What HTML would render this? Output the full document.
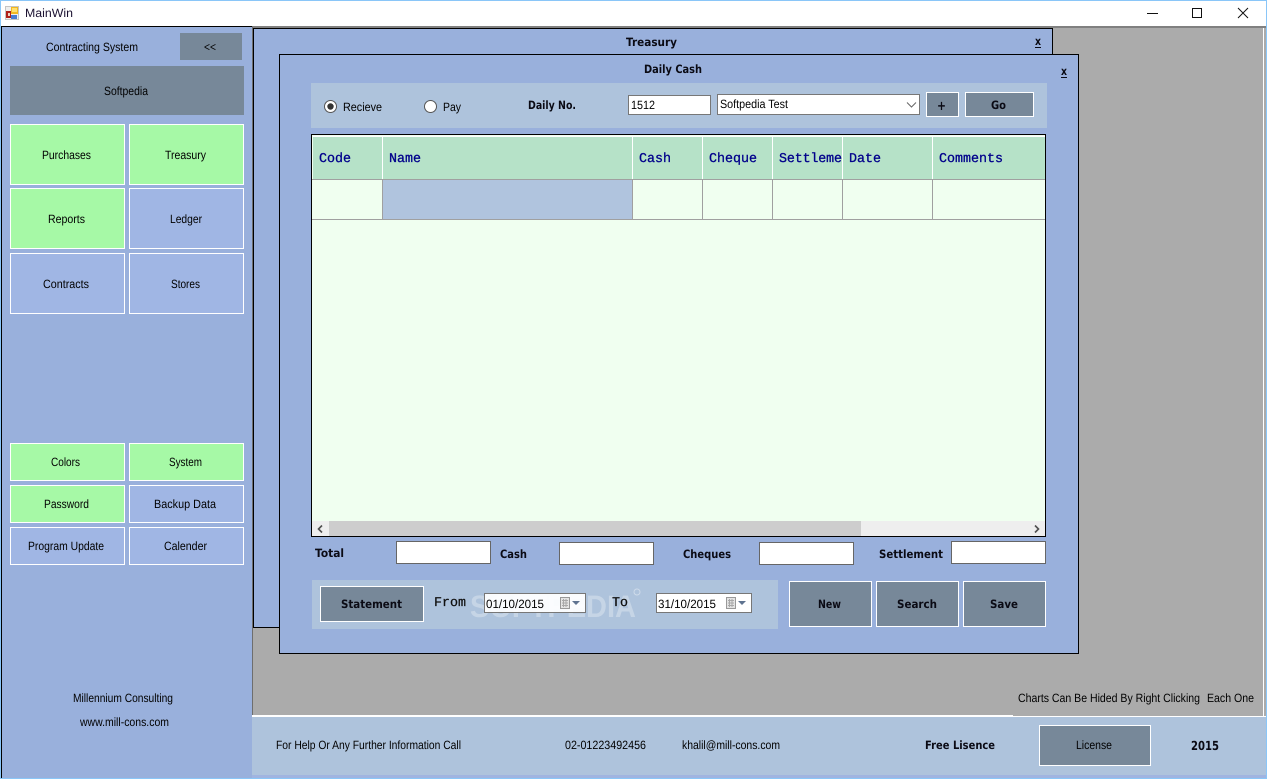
<!DOCTYPE html>
<html><head><meta charset="utf-8"><title>MainWin</title>
<style>
html,body{margin:0;padding:0;background:#fff;width:1267px;height:779px;overflow:hidden}
svg{display:block}
text{font-family:"Liberation Sans",sans-serif;font-size:12px;fill:#000;text-rendering:geometricPrecision}
.b{font-family:"DejaVu Sans",sans-serif;font-weight:bold;font-size:11.5px;fill:#0a0a14}
.m{font-family:"Liberation Mono",monospace;font-size:13.33px;fill:#00008b;stroke:#00008b;stroke-width:.3}
.k{font-family:"Liberation Mono",monospace;font-size:13.33px;fill:#111;stroke:#111;stroke-width:.25}
rect,line{shape-rendering:crispEdges}
</style></head><body>
<svg xmlns="http://www.w3.org/2000/svg" width="1267" height="779" viewBox="0 0 1267 779">
<!-- window -->
<rect width="1267" height="779" fill="#8ac6f8"/>
<rect x="1" y="1" width="1265" height="777" fill="#fff"/>
<!-- title bar -->
<rect x="5" y="6" width="14" height="14" fill="#c4c4c4"/>
<rect x="6" y="7" width="12" height="12" fill="#eee"/>
<rect x="6" y="11" width="5" height="7" fill="#b02018"/>
<rect x="8" y="13" width="2" height="3" fill="#f0d0c0"/>
<rect x="11" y="7" width="7" height="7" fill="#f2b820"/>
<rect x="12" y="8" width="5" height="4" fill="#ffe070"/>
<rect x="11" y="15" width="6" height="4" fill="#4a7cd0"/>
<text x="25" y="17" textLength="48" lengthAdjust="spacingAndGlyphs" style="fill:#1a1030">MainWin</text>
<rect x="1147" y="13" width="11" height="1" fill="#111"/>
<rect x="1192.5" y="8.5" width="9" height="9" fill="none" stroke="#111" stroke-width="1" shape-rendering="crispEdges"/>
<path d="M1238 8L1248 18M1248 8L1238 18" stroke="#111" stroke-width="1" fill="none"/>
<!-- MDI area -->
<rect x="252" y="26" width="1014" height="690" fill="#ababab"/>
<rect x="252" y="26" width="1014" height="2" fill="#808080"/>
<rect x="252" y="26" width="1" height="690" fill="#6e6e6e"/>
<rect x="1263" y="28" width="1" height="690" fill="#fff"/>
<!-- sidebar -->
<rect x="1" y="26" width="251" height="752" fill="#99b0dc"/>
<rect x="1" y="26" width="251" height="1" fill="#000"/>
<rect x="1" y="26" width="1" height="752" fill="#000"/>
<text x="46" y="51" textLength="92" lengthAdjust="spacingAndGlyphs">Contracting System</text>
<rect x="180" y="33" width="62" height="27" fill="#778899"/>
<text x="204" y="51" textLength="12" lengthAdjust="spacingAndGlyphs">&lt;&lt;</text>
<rect x="10" y="66" width="234" height="49" fill="#778899"/>
<text x="104" y="95" textLength="44" lengthAdjust="spacingAndGlyphs">Softpedia</text>
<g stroke="#fff" stroke-width="1">
<rect x="10.5" y="124.5" width="114" height="60" fill="#a6f9a6"/>
<rect x="129.5" y="124.5" width="114" height="60" fill="#a6f9a6"/>
<rect x="10.5" y="188.5" width="114" height="60" fill="#a6f9a6"/>
<rect x="129.5" y="188.5" width="114" height="60" fill="#a0b6e4"/>
<rect x="10.5" y="253.5" width="114" height="60" fill="#a0b6e4"/>
<rect x="129.5" y="253.5" width="114" height="60" fill="#a0b6e4"/>
<rect x="10.5" y="443.5" width="114" height="37" fill="#a6f9a6"/>
<rect x="129.5" y="443.5" width="114" height="37" fill="#a6f9a6"/>
<rect x="10.5" y="485.5" width="114" height="37" fill="#a6f9a6"/>
<rect x="129.5" y="485.5" width="114" height="37" fill="#a0b6e4"/>
<rect x="10.5" y="527.5" width="114" height="37" fill="#a0b6e4"/>
<rect x="129.5" y="527.5" width="114" height="37" fill="#a0b6e4"/>
</g>
<text x="42" y="159" textLength="49" lengthAdjust="spacingAndGlyphs">Purchases</text>
<text x="165" y="159" textLength="41" lengthAdjust="spacingAndGlyphs">Treasury</text>
<text x="48" y="223" textLength="37" lengthAdjust="spacingAndGlyphs">Reports</text>
<text x="170" y="223" textLength="32" lengthAdjust="spacingAndGlyphs">Ledger</text>
<text x="43" y="288" textLength="46" lengthAdjust="spacingAndGlyphs">Contracts</text>
<text x="171" y="288" textLength="29" lengthAdjust="spacingAndGlyphs">Stores</text>
<text x="51" y="466" textLength="29" lengthAdjust="spacingAndGlyphs">Colors</text>
<text x="169" y="466" textLength="33" lengthAdjust="spacingAndGlyphs">System</text>
<text x="44" y="508" textLength="45" lengthAdjust="spacingAndGlyphs">Password</text>
<text x="154" y="508" textLength="62" lengthAdjust="spacingAndGlyphs">Backup Data</text>
<text x="28" y="550" textLength="76" lengthAdjust="spacingAndGlyphs">Program Update</text>
<text x="164" y="550" textLength="43" lengthAdjust="spacingAndGlyphs">Calender</text>
<text x="73" y="702" textLength="100" lengthAdjust="spacingAndGlyphs">Millennium Consulting</text>
<text x="80" y="726" textLength="89" lengthAdjust="spacingAndGlyphs">www.mill-cons.com</text>
<!-- footer -->
<rect x="252" y="715" width="761" height="2" fill="#fff"/>
<rect x="1013" y="716" width="251" height="1" fill="#fff"/>
<rect x="252" y="717" width="1014" height="61" fill="#a0b4e0"/>
<rect x="252" y="717" width="1014" height="58" fill="#aec3dc"/>
<text x="1018" y="702" textLength="182" lengthAdjust="spacingAndGlyphs">Charts Can Be Hided By Right Clicking</text>
<text x="1207" y="702" textLength="47" lengthAdjust="spacingAndGlyphs">Each One</text>
<text x="276" y="749" textLength="185" lengthAdjust="spacingAndGlyphs">For Help Or Any Further Information Call</text>
<text x="565" y="749" textLength="81" lengthAdjust="spacingAndGlyphs">02-01223492456</text>
<text x="682" y="749" textLength="98" lengthAdjust="spacingAndGlyphs">khalil@mill-cons.com</text>
<text class="b" x="925" y="749" textLength="70" lengthAdjust="spacingAndGlyphs">Free Lisence</text>
<rect x="1039.5" y="725.5" width="111" height="40" fill="#778899" stroke="#fff"/>
<text x="1076" y="749" textLength="36" lengthAdjust="spacingAndGlyphs">License</text>
<text class="b" x="1191" y="750" textLength="28" lengthAdjust="spacingAndGlyphs" style="font-size:12.5px">2015</text>
<!-- Treasury window -->
<rect x="253.5" y="28.5" width="799" height="599" fill="#99b0dc" stroke="#000"/>
<text class="b" x="626" y="46" textLength="51" lengthAdjust="spacingAndGlyphs">Treasury</text>
<text class="b" x="1035" y="45" textLength="6" lengthAdjust="spacingAndGlyphs">x</text>
<rect x="1035" y="47" width="6" height="1" fill="#0a0a14"/>
<!-- Daily Cash window -->
<rect x="279.5" y="54.5" width="799" height="599" fill="#99b0dc" stroke="#000"/>
<text class="b" x="644" y="73" textLength="58" lengthAdjust="spacingAndGlyphs">Daily Cash</text>
<text class="b" x="1061" y="75" textLength="6" lengthAdjust="spacingAndGlyphs">x</text>
<rect x="1061" y="77" width="6" height="1" fill="#0a0a14"/>
<!-- top panel -->
<rect x="311" y="83" width="736" height="45" fill="#aec3dc"/>
<circle cx="330.5" cy="106.5" r="6" fill="#fff" stroke="#555" stroke-width="1"/>
<circle cx="330.5" cy="106.5" r="3.2" fill="#333"/>
<text x="343" y="111" textLength="39" lengthAdjust="spacingAndGlyphs">Recieve</text>
<circle cx="430.5" cy="106.5" r="6" fill="#fff" stroke="#555" stroke-width="1"/>
<text x="443" y="111" textLength="18" lengthAdjust="spacingAndGlyphs">Pay</text>
<text class="b" x="528" y="109" textLength="48" lengthAdjust="spacingAndGlyphs">Daily No.</text>
<rect x="628.5" y="95.5" width="82" height="19" fill="#fff" stroke="#777"/>
<text x="631" y="109" textLength="24" lengthAdjust="spacingAndGlyphs">1512</text>
<rect x="717.5" y="94.5" width="202" height="20" fill="#fff" stroke="#777"/>
<text x="720" y="108" textLength="68" lengthAdjust="spacingAndGlyphs">Softpedia Test</text>
<path d="M907 102.5L911.5 107L916 102.5" fill="none" stroke="#666" stroke-width="1"/>
<rect x="926.5" y="92.5" width="32" height="24" fill="#778899" stroke="#fff"/>
<text class="b" x="937" y="110" textLength="9" lengthAdjust="spacingAndGlyphs" style="font-size:13px">+</text>
<rect x="965.5" y="92.5" width="68" height="24" fill="#778899" stroke="#fff"/>
<text class="b" x="991" y="109" textLength="15" lengthAdjust="spacingAndGlyphs">Go</text>
<!-- grid -->
<rect x="311.5" y="134.5" width="734" height="402" fill="#f0fff0" stroke="#000"/>
<rect x="313" y="136" width="732" height="44" fill="#b6e2c8"/>
<rect x="313" y="136" width="732" height="1" fill="#fff"/>
<rect x="382" y="137" width="1" height="42" fill="#fff"/>
<rect x="632" y="137" width="1" height="42" fill="#fff"/>
<rect x="702" y="137" width="1" height="42" fill="#fff"/>
<rect x="772" y="137" width="1" height="42" fill="#fff"/>
<rect x="842" y="137" width="1" height="42" fill="#fff"/>
<rect x="932" y="137" width="1" height="42" fill="#fff"/>
<rect x="312" y="179" width="733" height="1" fill="#a0a0a0"/>
<rect x="383" y="180" width="249" height="39" fill="#b0c4de"/>
<rect x="312" y="219" width="733" height="1" fill="#a0a0a0"/>
<rect x="382" y="180" width="1" height="39" fill="#a0a0a0"/>
<rect x="632" y="180" width="1" height="39" fill="#a0a0a0"/>
<rect x="702" y="180" width="1" height="39" fill="#a0a0a0"/>
<rect x="772" y="180" width="1" height="39" fill="#a0a0a0"/>
<rect x="842" y="180" width="1" height="39" fill="#a0a0a0"/>
<rect x="932" y="180" width="1" height="39" fill="#a0a0a0"/>
<text class="m" x="319" y="162">Code</text>
<text class="m" x="389" y="162">Name</text>
<text class="m" x="639" y="162">Cash</text>
<text class="m" x="709" y="162">Cheque</text>
<text class="m" x="779" y="162" textLength="63" lengthAdjust="spacing">Settleme</text>
<text class="m" x="849" y="162">Date</text>
<text class="m" x="939" y="162">Comments</text>
<!-- scrollbar -->
<rect x="312" y="521" width="733" height="15" fill="#eeeeee"/>
<rect x="329" y="521" width="532" height="15" fill="#cdcdcd"/>
<path d="M322 525.5L318.5 529L322 532.5" fill="none" stroke="#505050" stroke-width="1.6"/>
<path d="M1035 525.5L1038.5 529L1035 532.5" fill="none" stroke="#505050" stroke-width="1.6"/>
<!-- totals -->
<text class="b" x="315" y="557" textLength="29" lengthAdjust="spacingAndGlyphs">Total</text>
<rect x="396.5" y="541.5" width="94" height="22" fill="#fff" stroke="#666"/>
<text class="b" x="500" y="558" textLength="27" lengthAdjust="spacingAndGlyphs">Cash</text>
<rect x="559.5" y="542.5" width="94" height="22" fill="#fff" stroke="#666"/>
<text class="b" x="683" y="558" textLength="48" lengthAdjust="spacingAndGlyphs">Cheques</text>
<rect x="759.5" y="542.5" width="94" height="22" fill="#fff" stroke="#666"/>
<text class="b" x="879" y="558" textLength="64" lengthAdjust="spacingAndGlyphs">Settlement</text>
<rect x="951.5" y="541.5" width="94" height="22" fill="#fff" stroke="#666"/>
<!-- bottom panel -->
<rect x="312" y="580" width="466" height="49" fill="#aec3dc"/>
<rect x="320.5" y="586.5" width="103" height="35" fill="#778899" stroke="#fff"/>
<text class="b" x="341" y="608" textLength="61" lengthAdjust="spacingAndGlyphs">Statement</text>
<text class="k" x="434" y="606">From</text>
<text x="470" y="617" textLength="166" lengthAdjust="spacingAndGlyphs" style="font-weight:bold;font-size:31px;fill:#fff;fill-opacity:.3">SOFTPEDIA</text>
<circle cx="637" cy="592" r="3" fill="none" stroke="#fff" stroke-opacity=".4"/>
<rect x="484.5" y="593.5" width="101" height="19" fill="#fff" fill-opacity=".93" stroke="#777"/>
<text x="486" y="608" textLength="58" lengthAdjust="spacingAndGlyphs">01/10/2015</text>
<rect x="560.5" y="597.5" width="9" height="11" fill="#e4e4e4" stroke="#999"/>
<path d="M562 600.5h6M562 603h6M562 605.5h6M563.5 599v8M566 599v8" stroke="#a8a8a8" stroke-width="1" fill="none"/>
<path d="M572 601h8l-4 4z" fill="#5f7390"/>
<text class="k" x="612" y="606">To</text>
<rect x="656.5" y="593.5" width="95" height="19" fill="#fff" stroke="#777"/>
<text x="658" y="608" textLength="58" lengthAdjust="spacingAndGlyphs">31/10/2015</text>
<rect x="726.5" y="597.5" width="9" height="11" fill="#e4e4e4" stroke="#999"/>
<path d="M728 600.5h6M728 603h6M728 605.5h6M729.5 599v8M732 599v8" stroke="#a8a8a8" stroke-width="1" fill="none"/>
<path d="M738 601h8l-4 4z" fill="#5f7390"/>
<rect x="789.5" y="581.5" width="82" height="45" fill="#778899" stroke="#fff"/>
<rect x="876.5" y="581.5" width="82" height="45" fill="#778899" stroke="#fff"/>
<rect x="963.5" y="581.5" width="82" height="45" fill="#778899" stroke="#fff"/>
<text class="b" x="818" y="608" textLength="23" lengthAdjust="spacingAndGlyphs">New</text>
<text class="b" x="897" y="608" textLength="40" lengthAdjust="spacingAndGlyphs">Search</text>
<text class="b" x="990" y="608" textLength="28" lengthAdjust="spacingAndGlyphs">Save</text>
</svg>
</body></html>
